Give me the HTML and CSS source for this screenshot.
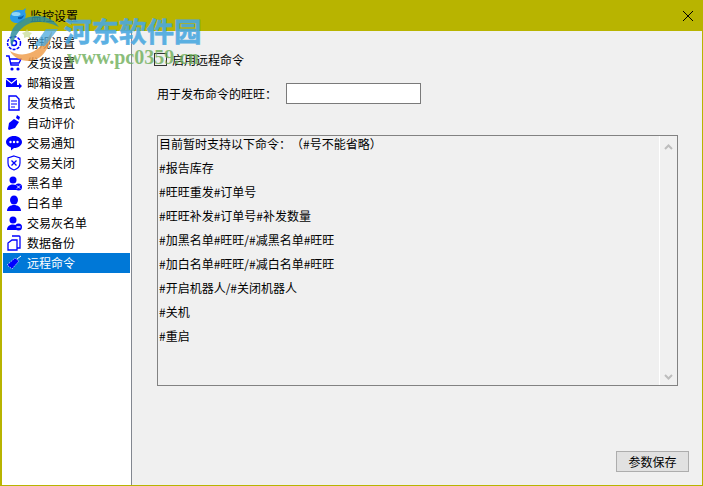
FILE: index.html
```html
<!DOCTYPE html>
<html lang="zh-CN">
<head>
<meta charset="utf-8">
<title>监控设置</title>
<link rel="stylesheet" href="styles.css">
</head>
<body>
<div class="window">
  <header class="titlebar">
    <svg class="app-icon" viewBox="0 0 18 18"><path d="M14 3l3-2-1 4c1 1.500 1 3 .5 5-1 4-4 6-8 6C4 16 1 14 1 10.500 1 6 5 3 9 3c2 0 3.500 0 5 0z" fill="#2a9be8"/><ellipse cx="7" cy="7" rx="4.500" ry="2" fill="#8fd6f8"/><path d="M9 10q4 0 6-2q-1 5-6 4z" fill="#0b5fae"/></svg>
    <span class="title">监控设置</span>
    <svg class="close" viewBox="0 0 10 10"><path d="M0 0L10 10M10 0L0 10" stroke="#000" stroke-width="1" fill="none"/></svg>
  </header>
  <div class="body">
    <nav class="sidebar">
      <div class="item"><svg class="ico" viewBox="0 0 16 16"><circle cx="8" cy="8" r="6.500" fill="none" stroke="#00f" stroke-width="1.500" stroke-dasharray="3 1.200"/><circle cx="8" cy="8" r="2.500" fill="none" stroke="#00f" stroke-width="1.500"/></svg><span>常规设置</span></div>
      <div class="item"><svg class="ico" viewBox="0 0 16 16"><path d="M0 1h3l2 9h8M4 4h11l-2 4H5" fill="none" stroke="#00f" stroke-width="1.400"/><circle cx="6" cy="14" r="1.600" fill="#00f"/><circle cx="12" cy="14" r="1.600" fill="#00f"/></svg><span>发货设置</span></div>
      <div class="item"><svg class="ico" viewBox="0 0 16 16"><path d="M0 3h11L5.500 7.500zM0 4.500l5.500 4.500L11 4.500V12H0z" fill="#00f"/><path d="M10 10h3V8l3 3-3 3v-2h-3z" fill="#00f"/></svg><span>邮箱设置</span></div>
      <div class="item"><svg class="ico" viewBox="0 0 16 16"><path d="M3 1h7l3 3v11H3z" fill="#fff" stroke="#00f" stroke-width="1.400"/><path d="M5 6h6M5 9h6M5 12h4" stroke="#00f" stroke-width="1.200"/></svg><span>发货格式</span></div>
      <div class="item"><svg class="ico" viewBox="0 0 16 16"><path d="M8 4l5 3-4 6-6 2-1-1 1-6z" fill="#00f"/><path d="M11 0l3 2-1 3-3-2z" fill="#00f"/></svg><span>自动评价</span></div>
      <div class="item"><svg class="ico" viewBox="0 0 16 16"><path d="M8 1c4.400 0 8 2.700 8 6s-3.600 6-8 6l-3 2.500V12.500C2 11.500 0 9.500 0 7c0-3.300 3.600-6 8-6z" fill="#00f"/><circle cx="4.500" cy="7" r="1.200" fill="#fff"/><circle cx="8" cy="7" r="1.200" fill="#fff"/><circle cx="11.500" cy="7" r="1.200" fill="#fff"/></svg><span>交易通知</span></div>
      <div class="item"><svg class="ico" viewBox="0 0 16 16"><path d="M8 1l6 2v5c0 3.500-3 6-6 7-3-1-6-3.500-6-7V3z" fill="#fff" stroke="#00f" stroke-width="1.200"/><path d="M5.500 5.500l5 5M10.500 5.500l-5 5" stroke="#00f" stroke-width="1.300"/></svg><span>交易关闭</span></div>
      <div class="item"><svg class="ico" viewBox="0 0 16 16"><circle cx="7" cy="5" r="3.500" fill="#00f"/><path d="M1 15c0-4 3-5.500 6-5.500 1 0 2 .2 3 .6V15z" fill="#00f"/><circle cx="12.500" cy="12" r="3.500" fill="#00f"/><path d="M11 10.500l3 3M14 10.500l-3 3" stroke="#fff"/></svg><span>黑名单</span></div>
      <div class="item"><svg class="ico" viewBox="0 0 16 16"><ellipse cx="8" cy="5" rx="4" ry="4.500" fill="#00f"/><path d="M1 16c0-4 3.500-6 7-6s7 2 7 6z" fill="#00f"/></svg><span>白名单</span></div>
      <div class="item"><svg class="ico" viewBox="0 0 16 16"><circle cx="7" cy="5" r="3.500" fill="#00f"/><path d="M1 15c0-4 3-5.500 6-5.500 1 0 2 .2 3 .6V15z" fill="#00f"/><circle cx="12.500" cy="12" r="3.500" fill="#00f"/><path d="M10.500 12h4" stroke="#fff" stroke-width="1.300"/></svg><span>交易灰名单</span></div>
      <div class="item"><svg class="ico" viewBox="0 0 16 16"><path d="M6 1h7a1 1 0 0 1 1 1v11h-3" fill="none" stroke="#00f" stroke-width="1.300"/><path d="M2 8l4-3h5v10H2z" fill="#fff" stroke="#00f" stroke-width="1.300"/></svg><span>数据备份</span></div>
      <div class="item selected"><svg class="ico" viewBox="0 0 16 16"><path d="M1 10l8-7 4 3-7 8z" fill="#00f" stroke="#cfe0ff" stroke-width=".8" stroke-dasharray="1.500 1"/><path d="M11 4l4-3" stroke="#fff"/></svg><span>远程命令</span></div>
    </nav>
    <main class="content">
      <label class="check-row"><span class="checkbox"></span><span>启用远程命令</span></label>
      <div class="field-row"><span class="field-label">用于发布命令的旺旺：</span><span class="input"></span></div>
      <div class="memo">
        <div class="memo-text">
          <div>目前暂时支持以下命令：（#号不能省略）</div>
          <div>#报告库存</div>
          <div>#旺旺重发#订单号</div>
          <div>#旺旺补发#订单号#补发数量</div>
          <div>#加黑名单#旺旺/#减黑名单#旺旺</div>
          <div>#加白名单#旺旺/#减白名单#旺旺</div>
          <div>#开启机器人/#关闭机器人</div>
          <div>#关机</div>
          <div>#重启</div>
        </div>
        <div class="scrollbar">
          <svg class="arrow" viewBox="0 0 9 6"><path d="M1 5l3.500-3.500L8 5" fill="none" stroke="#bdbdbd" stroke-width="2"/></svg>
          <svg class="arrow" viewBox="0 0 9 6"><path d="M1 1l3.500 3.500L8 1" fill="none" stroke="#bdbdbd" stroke-width="2"/></svg>
        </div>
      </div>
      <div class="actions"><button class="save" type="button">参数保存</button></div>
    </main>
  </div>
  <div class="watermark">
    <svg class="wm-logo" viewBox="0 0 54 46"><path d="M5 32C-2 14 14 1 30 1c10 0 17 4 22 11-8-4-14-5-21-5C17 7 8 18 5 32z" fill="#2f8f9f" opacity=".85"/><path d="M3 36c14 8 30 2 42-20-1 16-10 30-23 30C13 46 6 42 3 36z" fill="#f0a050" opacity=".85"/><path d="M27 31l12-17h12L38 31z" fill="#4aa8dc" opacity=".75"/><path d="M20 14l2 3 3 1-2 2v3l-3-1-3 1v-3l-2-2 3-1z" fill="#c4d890" opacity=".7"/></svg>
    <span class="wm-name">河东软件园</span>
    <span class="wm-url">www.pc0359.cn</span>
  </div>
</div>
</body>
</html>
```

FILE: styles.css
```css
* { box-sizing: border-box; }
html, body { margin: 0; padding: 0; }
body {
  width: 703px;
  height: 486px;
  overflow: hidden;
  font-family: "Noto Sans CJK SC", "Liberation Sans", sans-serif;
  font-size: 12px;
  color: #000;
  text-spacing-trim: space-all;
}
.window {
  position: relative;
  width: 703px;
  height: 486px;
  background: #b8b400;
  padding: 0 1px 1px 2px;
  display: flex;
  flex-direction: column;
}
.titlebar {
  height: 31px;
  flex: none;
  display: flex;
  align-items: center;
  padding-left: 7px;
}
.app-icon { width: 18px; height: 18px; margin-right: 3px; }
.title { line-height: 31px; }
.close { width: 10px; height: 10px; margin-left: auto; margin-right: 9px; }
.body { flex: 1; display: flex; min-height: 0; }
.sidebar {
  width: 130px;
  flex: none;
  background: #fff;
  border-right: 1px solid #828790;
  padding: 2px 1px 0 1px;
}
.item {
  height: 20px;
  display: flex;
  align-items: center;
  padding-left: 3px;
  gap: 5px;
  line-height: 20px;
}
.ico { width: 16px; height: 16px; flex: none; }
.selected { background: #0078d7; color: #fff; }
.content {
  flex: 1;
  background: #f0f0f0;
  padding: 22px 0 0 22px;
  display: flex;
  flex-direction: column;
}
.check-row { display: flex; align-items: center; height: 13px; gap: 5px; }
.checkbox { width: 13px; height: 13px; border: 1px solid #333; }
.field-row { display: flex; align-items: center; height: 21px; margin-top: 17px; padding-left: 3px; }
.field-label { width: 129px; }
.input { width: 135px; height: 21px; background: #fff; border: 1px solid #7a7a7a; }
.memo {
  width: 521px;
  height: 251px;
  margin: 31px 0 0 3px;
  border: 1px solid #828282;
  display: flex;
  flex: none;
}
.memo-text { flex: 1; padding-left: 1px; }
.memo-text div { height: 24px; line-height: 16px; }
.scrollbar {
  width: 18px;
  border-left: 1px solid #fff;
  display: flex;
  flex-direction: column;
  justify-content: space-between;
  align-items: center;
  padding: 8px 0 5px;
}
.arrow { width: 9px; height: 6px; }
.actions { margin-top: 65px; padding-right: 13px; display: flex; justify-content: flex-end; }
.save {
  width: 73px;
  height: 21px;
  padding: 0;
  background: #e1e1e1;
  border: 1px solid #adadad;
  font: inherit;
  color: #000;
}
.watermark { position: absolute; left: 0; top: 0; width: 220px; height: 75px; pointer-events: none; }
.wm-logo { position: absolute; left: 7px; top: 15px; width: 54px; height: 46px; }
.wm-name {
  position: absolute;
  left: 64px;
  top: 10px;
  font-weight: 700;
  font-size: 27.500px;
  line-height: 40px;
  color: #4aa8e0;
  -webkit-text-stroke: .6px #4aa8e0;
  opacity: .9;
  white-space: nowrap;
}
.wm-url {
  position: absolute;
  left: 67px;
  top: 45px;
  font-family: "Liberation Serif", serif;
  font-weight: 700;
  font-size: 20px;
  line-height: 24px;
  color: #6fae5a;
  opacity: .8;
  white-space: nowrap;
}
```
